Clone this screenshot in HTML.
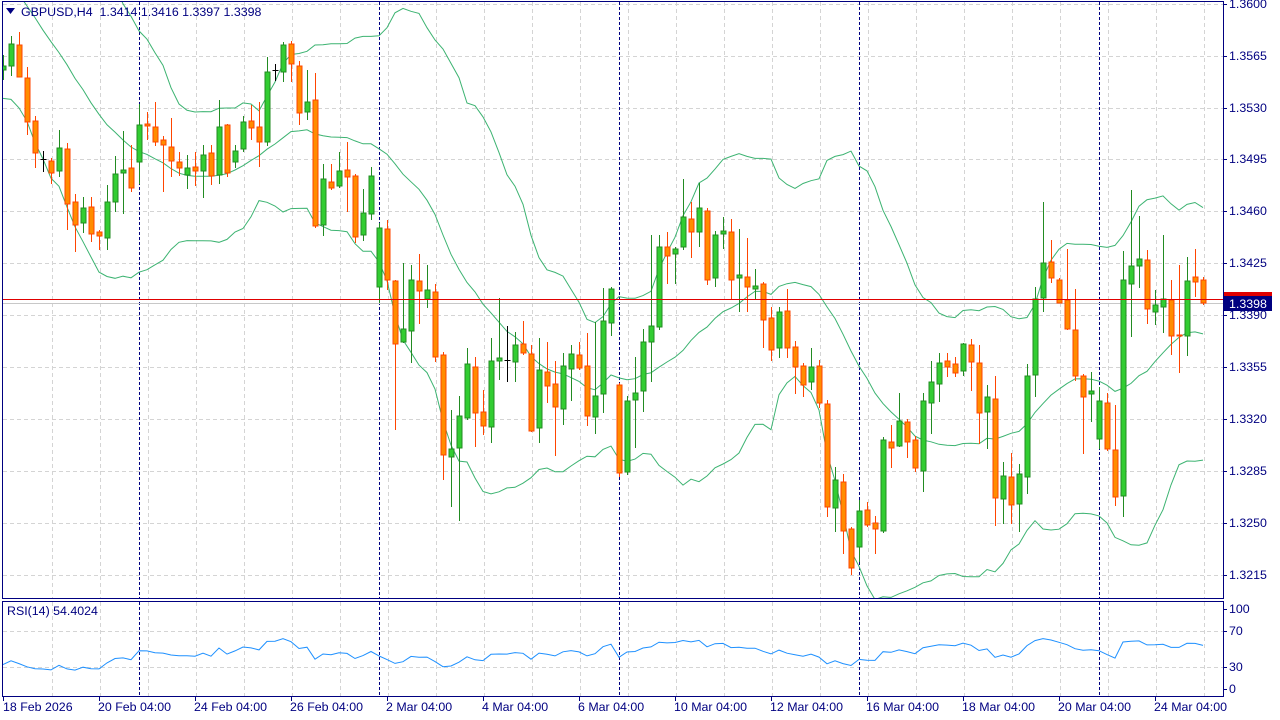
<!DOCTYPE html>
<html><head><meta charset="utf-8"><style>
html,body{margin:0;padding:0;background:#fff;width:1280px;height:720px;overflow:hidden}
svg{display:block}
text{font-family:"Liberation Sans",sans-serif;font-size:12.4px;white-space:pre}
</style></head><body>
<svg id="s" width="1280" height="720" xmlns="http://www.w3.org/2000/svg">
<defs>
<clipPath id="cm"><rect x="3" y="2" width="1220" height="596"/></clipPath>
<clipPath id="cr"><rect x="3" y="602" width="1220" height="94"/></clipPath>
</defs>
<rect width="1280" height="720" fill="#fff"/>
<g id="grid" stroke="#d4d4d4" stroke-dasharray="4,3" stroke-width="1"></g>
<g id="seps" stroke="#000080" stroke-dasharray="3,2" stroke-width="1"></g>
<line x1="3" y1="303.5" x2="1223" y2="303.5" stroke="#c8c8c8"/>
<g id="bands" clip-path="url(#cm)" fill="none" stroke="#3CB371" stroke-width="1"></g>
<g id="candles" clip-path="url(#cm)"></g>
<line x1="3" y1="299.5" x2="1223" y2="299.5" stroke="#e00000"/>
<g id="rsi" clip-path="url(#cr)" fill="none" stroke="#1E90FF" stroke-width="1"></g>
<g fill="none" stroke="#000080" stroke-width="1">
<rect x="2.5" y="1.5" width="1221" height="597"/>
<rect x="2.5" y="601.5" width="1221" height="95"/>
</g>
<g id="ticks" stroke="#000080" stroke-width="1"></g>
<path d="M6 8 L15 8 L10.5 14 Z" fill="#000080"/>
<text x="21" y="16" fill="#000080" xml:space="preserve">GBPUSD,H4  1.3414 1.3416 1.3397 1.3398</text>
<text x="7" y="615" fill="#000080">RSI(14) 54.4024</text>
<g fill="#000080">
<text x="1229" y="8">1.3600</text>
<text x="1229" y="60">1.3565</text>
<text x="1229" y="112">1.3530</text>
<text x="1229" y="163">1.3495</text>
<text x="1229" y="215">1.3460</text>
<text x="1229" y="267">1.3425</text>
<text x="1229" y="319">1.3390</text>
<text x="1229" y="371">1.3355</text>
<text x="1229" y="423">1.3320</text>
<text x="1229" y="475">1.3285</text>
<text x="1229" y="527">1.3250</text>
<text x="1229" y="579">1.3215</text>
<text x="1229" y="613">100</text>
<text x="1229" y="635">70</text>
<text x="1229" y="671">30</text>
<text x="1229" y="693">0</text>
</g>
<rect x="1224" y="292" width="48" height="5" fill="#e00000"/>
<rect x="1224" y="296" width="48" height="15" fill="#000080"/>
<text x="1229" y="308" fill="#fff">1.3398</text>
<g fill="#000080">
<text x="3" y="711">18 Feb 2026</text>
<text x="98" y="711">20 Feb 04:00</text>
<text x="194" y="711">24 Feb 04:00</text>
<text x="290" y="711">26 Feb 04:00</text>
<text x="386" y="711">2 Mar 04:00</text>
<text x="482" y="711">4 Mar 04:00</text>
<text x="578" y="711">6 Mar 04:00</text>
<text x="674" y="711">10 Mar 04:00</text>
<text x="770" y="711">12 Mar 04:00</text>
<text x="866" y="711">16 Mar 04:00</text>
<text x="962" y="711">18 Mar 04:00</text>
<text x="1058" y="711">20 Mar 04:00</text>
<text x="1154" y="711">24 Mar 04:00</text>
</g>
</svg>
<script>
var NS="http://www.w3.org/2000/svg";
function el(p,t,a){var e=document.createElementNS(NS,t);for(var k in a)e.setAttribute(k,a[k]);p.appendChild(e);return e;}
var D=[[70,66,55,80],[66,44,36,76],[45,77,32,77],[78,122,67,135],[121,153,116,168],[159,159,151,172],[161,173,158,184],[171,148,130,177],[149,204,143,230],[202,225,194,252],[223,208,197,233],[207,234,197,242],[232,236,230,250],[238,202,185,250],[202,174,156,212],[173,170,131,214],[168,188,145,192],[162,125,104,184],[124,126,112,140],[127,142,102,146],[140,145,136,192],[147,161,118,177],[162,168,152,176],[175,168,155,189],[167,171,152,186],[171,155,145,198],[153,176,145,185],[175,127,100,184],[125,173,124,177],[162,151,145,168],[149,122,116,152],[121,128,105,140],[127,142,102,167],[142,72,57,146],[70,70,64,81],[72,45,42,82],[44,64,41,82],[66,113,61,125],[112,102,70,120],[100,226,73,228],[225,179,164,236],[182,188,164,190],[186,171,152,188],[170,177,142,212],[176,237,174,243],[235,213,189,241],[214,176,167,220],[287,228,223,303],[229,280,220,290],[281,344,280,430],[342,329,263,343],[331,280,265,363],[281,291,254,324],[299,290,265,308],[292,357,284,362],[355,455,352,480],[457,449,410,507],[448,416,396,521],[418,364,348,420],[367,413,357,447],[412,426,390,435],[427,361,338,443],[361,358,298,380],[360,360,326,382],[362,345,332,382],[344,353,321,355],[354,431,345,432],[428,370,338,443],[372,386,342,403],[384,407,361,456],[409,366,353,425],[369,354,345,401],[355,368,342,370],[366,416,333,426],[417,396,322,434],[394,321,288,413],[323,289,287,336],[385,473,383,477],[472,401,396,475],[400,393,357,448],[391,342,329,412],[342,326,235,382],[327,247,235,330],[247,256,232,284],[254,249,247,284],[247,217,179,250],[219,232,202,258],[232,208,183,247],[211,280,208,285],[278,235,231,287],[234,231,217,249],[232,280,219,300],[278,275,229,312],[277,287,238,312],[289,286,269,300],[284,320,282,348],[318,350,307,361],[348,312,307,358],[311,348,289,358],[347,367,341,394],[366,385,363,397],[382,367,348,390],[366,403,360,408],[404,507,400,517],[508,480,467,532],[482,531,474,554],[529,568,527,575],[547,511,500,562],[510,525,502,527],[523,529,516,554],[531,440,437,533],[442,448,425,468],[446,421,393,447],[422,442,419,458],[440,468,436,472],[471,401,393,492],[403,382,361,434],[384,363,353,402],[361,367,353,377],[364,373,357,377],[371,344,343,376],[345,362,339,391],[363,413,345,444],[412,397,385,449],[399,498,376,526],[499,476,462,524],[477,505,453,524],[504,474,464,532],[477,376,364,494],[375,299,287,397],[298,263,202,312],[262,278,240,283],[280,303,278,303],[300,329,249,330],[330,376,289,381],[376,397,374,454],[394,391,372,422],[439,401,387,449],[403,449,393,451],[450,497,405,506],[496,280,251,517],[284,266,190,337],[266,259,216,288],[260,309,250,324],[312,305,290,325],[307,299,235,333],[300,336,280,355],[335,336,265,373],[336,281,257,356],[277,282,249,297],[280,303,277,305]];
var X=function(i){return 3+8*i;};
var g=document.getElementById('grid');
var ys=[4,56,108,159,211,263,315,367,419,471,523,575];
ys.forEach(function(y){el(g,'line',{x1:3,y1:y+.5,x2:1223,y2:y+.5});});
for(var x=52;x<1223;x+=48){el(g,'line',{x1:x+.5,y1:2,x2:x+.5,y2:598});el(g,'line',{x1:x+.5,y1:602,x2:x+.5,y2:696});}
[631,667].forEach(function(y){el(g,'line',{x1:3,y1:y+.5,x2:1223,y2:y+.5});});
var sp=document.getElementById('seps');
[139,379,619,859,1099].forEach(function(x){el(sp,'line',{x1:x+.5,y1:2,x2:x+.5,y2:598});el(sp,'line',{x1:x+.5,y1:602,x2:x+.5,y2:696});});
var tk=document.getElementById('ticks');
ys.forEach(function(y){el(tk,'line',{x1:1223,y1:y+.5,x2:1227,y2:y+.5});});
[609,631,667,689].forEach(function(y){el(tk,'line',{x1:1223,y1:y+.5,x2:1227,y2:y+.5});});
for(var x=3;x<1223;x+=96){el(tk,'line',{x1:x+.5,y1:696,x2:x+.5,y2:701});}
var cg=document.getElementById('candles');
D.forEach(function(d,i){var o=d[0],c=d[1],h=d[2],l=d[3],x=X(i)+.5;
 var wc,fc,bc;
 if(c<o){wc='#228B22';fc='#32CD32';bc='#228B22';}else if(c>o){wc='#FF4500';fc='#FF8C00';bc='#FF4500';}else{wc='#000';}
 el(cg,'line',{x1:x,y1:h,x2:x,y2:l,stroke:wc,'stroke-width':1});
 if(c==o){el(cg,'line',{x1:x-3,y1:o+.5,x2:x+3,y2:o+.5,stroke:'#000'});}
 else{var t=Math.min(o,c),b=Math.max(o,c);el(cg,'rect',{x:x-2.5,y:t,width:5,height:Math.max(1,b-t),fill:fc,stroke:bc,'stroke-width':1});}
});
var C=[];for(var k=0;k<20;k++){C.push(-120+k*10.5+(k%2?-25:0));}
D.forEach(function(d){C.push(d[1]);});
var up=[],mid=[],lo=[];
for(var i=0;i<D.length;i++){var j=i+20,s1=0;for(var k=j-19;k<=j;k++)s1+=C[k];var m=s1/20,v=0;for(var k=j-19;k<=j;k++)v+=(C[k]-m)*(C[k]-m);var sd=Math.sqrt(v/20);
 mid.push(X(i)+','+m.toFixed(1));up.push(X(i)+','+(m-2*sd).toFixed(1));lo.push(X(i)+','+(m+2*sd).toFixed(1));}
var bg=document.getElementById('bands');
[up,mid,lo].forEach(function(p){el(bg,'polyline',{points:p.join(' ')});});
var ag=0,al=0,pts=[];
for(var j=1;j<C.length;j++){var ch=C[j-1]-C[j],gn=ch>0?ch:0,ls=ch<0?-ch:0;
 if(j<=14){ag+=gn/14;al+=ls/14;}else{ag=(ag*13+gn)/14;al=(al*13+ls)/14;}
 if(j>=20){var r=al==0?100:100-100/(1+ag/al);pts.push(X(j-20)+','+(609+(100-r)*0.8).toFixed(1));}}
el(document.getElementById('rsi'),'polyline',{points:pts.join(' ')});
</script>
</body></html>
